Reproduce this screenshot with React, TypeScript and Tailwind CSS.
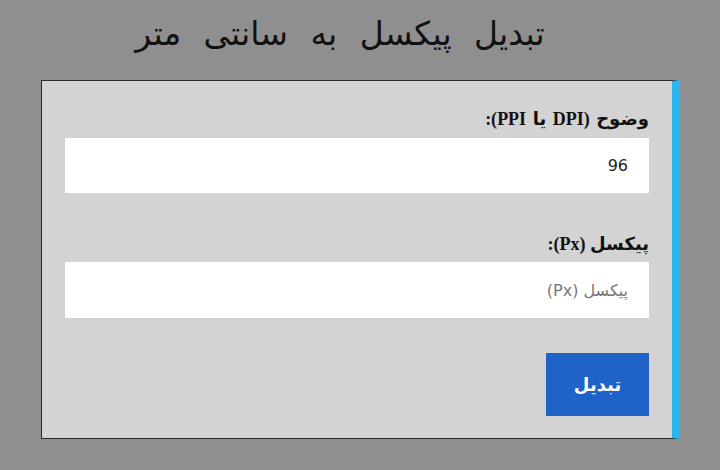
import React, { useState } from 'react';

export default function App() {
  const [ppi, setPpi] = useState('96');
  const [px, setPx] = useState('');

  return (
    <div dir="rtl" className="min-h-[470px] w-full bg-[#8f8f8f] pt-[11px] font-['DejaVu_Sans',sans-serif]">
      <h1 className="pr-[40px] text-center text-[33px] leading-[46px] text-[#111] [word-spacing:12px]">
        تبدیل پیکسل به سانتی متر
      </h1>

      <div className="mx-auto mt-[23px] w-[638px] border border-r-[7px] border-[#2a2a2a] border-r-[#2bb6f2] bg-[#d3d3d3] px-[23px] pb-[22px] pt-[26px]">
        <label className="block text-[18px] font-bold leading-[24px] text-[#111] font-['Liberation_Serif','DejaVu_Sans',serif] [word-spacing:2px]">
          وضوح (DPI یا PPI):
        </label>
        <input
          type="text"
          value={ppi}
          onChange={(e) => setPpi(e.target.value)}
          className="mt-[7px] block h-[55px] w-full bg-white px-[21px] text-[16px] text-[#222] outline-none"
        />

        <label className="mt-[39px] block text-[18px] font-bold leading-[24px] text-[#111] font-['Liberation_Serif','DejaVu_Sans',serif]">
          پیکسل (Px):
        </label>
        <input
          type="text"
          value={px}
          placeholder="پیکسل (Px)"
          onChange={(e) => setPx(e.target.value)}
          className="mt-[6px] block h-[56px] w-full bg-white px-[21px] text-[16px] text-[#222] outline-none placeholder:text-[#777]"
        />

        <button className="mt-[35px] block h-[63px] w-[103px] bg-[#1f63c9] text-[18px] font-bold text-white">
          تبدیل
        </button>
      </div>
    </div>
  );
}
